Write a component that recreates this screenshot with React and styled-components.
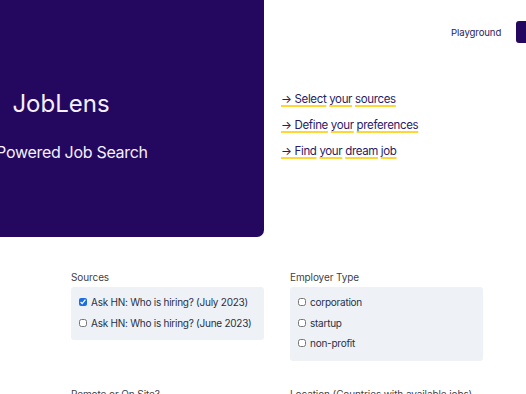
import React from "react";
import styled, { createGlobalStyle } from "styled-components";

const Global = createGlobalStyle`
  html, body { margin: 0; padding: 0; background: #ffffff; overflow: hidden; }
  body { font-family: "Inter", "Noto Sans", sans-serif; width: 526px; height: 394px; }
`;

const Page = styled.div`
  width: 526px;
  height: 394px;
  overflow: hidden;
`;

const Header = styled.header`
  display: flex;
  align-items: flex-start;
  width: 620px;
`;

const Hero = styled.section`
  flex: none;
  width: 406px;
  margin-left: -142px;
  height: 237px;
  background: #24075e;
  border-bottom-right-radius: 7px;
  color: #f4f0ff;
  display: flex;
  flex-direction: column;
  align-items: center;
  padding-top: 87px;
  box-sizing: border-box;
`;

const Title = styled.h1`
  margin: 0;
  font-size: 24px;
  font-weight: 400;
  letter-spacing: 0;
  line-height: 34px;
`;

const Subtitle = styled.p`
  margin: 21px 0 0;
  font-size: 16px;
  font-weight: 400;
  line-height: 20px;
  letter-spacing: -0.3px;
`;

const Side = styled.div`
  flex: none;
  width: 340px;
  display: flex;
  flex-direction: column;
`;

const Nav = styled.nav`
  display: flex;
  align-items: center;
  gap: 15px;
  padding: 21px 0 0 187px;
  height: 22px;
`;

const NavLink = styled.a`
  font-size: 9.6px;
  color: #2a1b5e;
  text-decoration: none;
  letter-spacing: -0.1px;
`;

const NavButton = styled.button`
  height: 22px;
  padding: 0 12px;
  border: none;
  border-radius: 3px;
  background: #24075e;
  color: #ffffff;
  font-family: inherit;
  font-size: 10px;
  white-space: nowrap;
`;

const Steps = styled.ul`
  list-style: none;
  margin: 43px 0 0;
  padding: 0 0 0 17px;
  display: flex;
  flex-direction: column;
`;

const Step = styled.li`
  height: 26px;
  line-height: 26px;
  font-size: 11.5px;
  color: #2a1b66;
  letter-spacing: -0.35px;
  white-space: nowrap;
`;

const Word = styled.span`
  text-decoration: underline;
  text-decoration-color: #fdd835;
  text-decoration-thickness: 2px;
  text-underline-offset: 2px;
`;

const Filters = styled.div`
  display: grid;
  grid-template-columns: 193px 193px;
  column-gap: 26px;
  row-gap: 26px;
  margin: 33px 0 0 71px;
  align-items: start;
`;

const Group = styled.div`
  display: flex;
  flex-direction: column;
`;

const Label = styled.div`
  font-size: 10px;
  line-height: 14px;
  color: #3f3f46;
  height: 17px;
  white-space: nowrap;
  letter-spacing: -0.1px;
`;

const Box = styled.div`
  background: #eef2f7;
  border-radius: 3px;
  padding: 5px 8px 7px;
  display: flex;
  flex-direction: column;
`;

const Option = styled.label`
  display: flex;
  align-items: center;
  gap: 4px;
  height: 20.5px;
  font-size: 10px;
  color: #273047;
  letter-spacing: -0.25px;
  white-space: nowrap;
`;

const Check = styled.input`
  width: 8px;
  height: 8px;
  margin: 0;
  accent-color: #1a6fe0;
`;

const steps = [
  ["→ Select", "your", "sources"],
  ["→ Define", "your", "preferences"],
  ["→ Find", "your", "dream", "job"],
];

export default function App() {
  return (
    <Page>
      <Global />
      <Header>
        <Hero>
          <Title>JobLens</Title>
          <Subtitle>AI-Powered Job Search</Subtitle>
        </Hero>
        <Side>
          <Nav>
            <NavLink href="#">Playground</NavLink>
            <NavButton>Get Started</NavButton>
          </Nav>
          <Steps>
            {steps.map((words) => (
              <Step key={words.join(" ")}>
                {words.map((w, i) => (
                  <React.Fragment key={i}>
                    {i > 0 && " "}
                    <Word>{w}</Word>
                  </React.Fragment>
                ))}
              </Step>
            ))}
          </Steps>
        </Side>
      </Header>
      <Filters>
        <Group>
          <Label>Sources</Label>
          <Box>
            <Option><Check type="checkbox" defaultChecked />Ask HN: Who is hiring? (July 2023)</Option>
            <Option><Check type="checkbox" />Ask HN: Who is hiring? (June 2023)</Option>
          </Box>
        </Group>
        <Group>
          <Label>Employer Type</Label>
          <Box>
            <Option><Check type="checkbox" />corporation</Option>
            <Option><Check type="checkbox" />startup</Option>
            <Option><Check type="checkbox" />non-profit</Option>
          </Box>
        </Group>
        <Group>
          <Label>Remote or On Site?</Label>
        </Group>
        <Group>
          <Label>Location (Countries with available jobs)</Label>
        </Group>
      </Filters>
    </Page>
  );
}
